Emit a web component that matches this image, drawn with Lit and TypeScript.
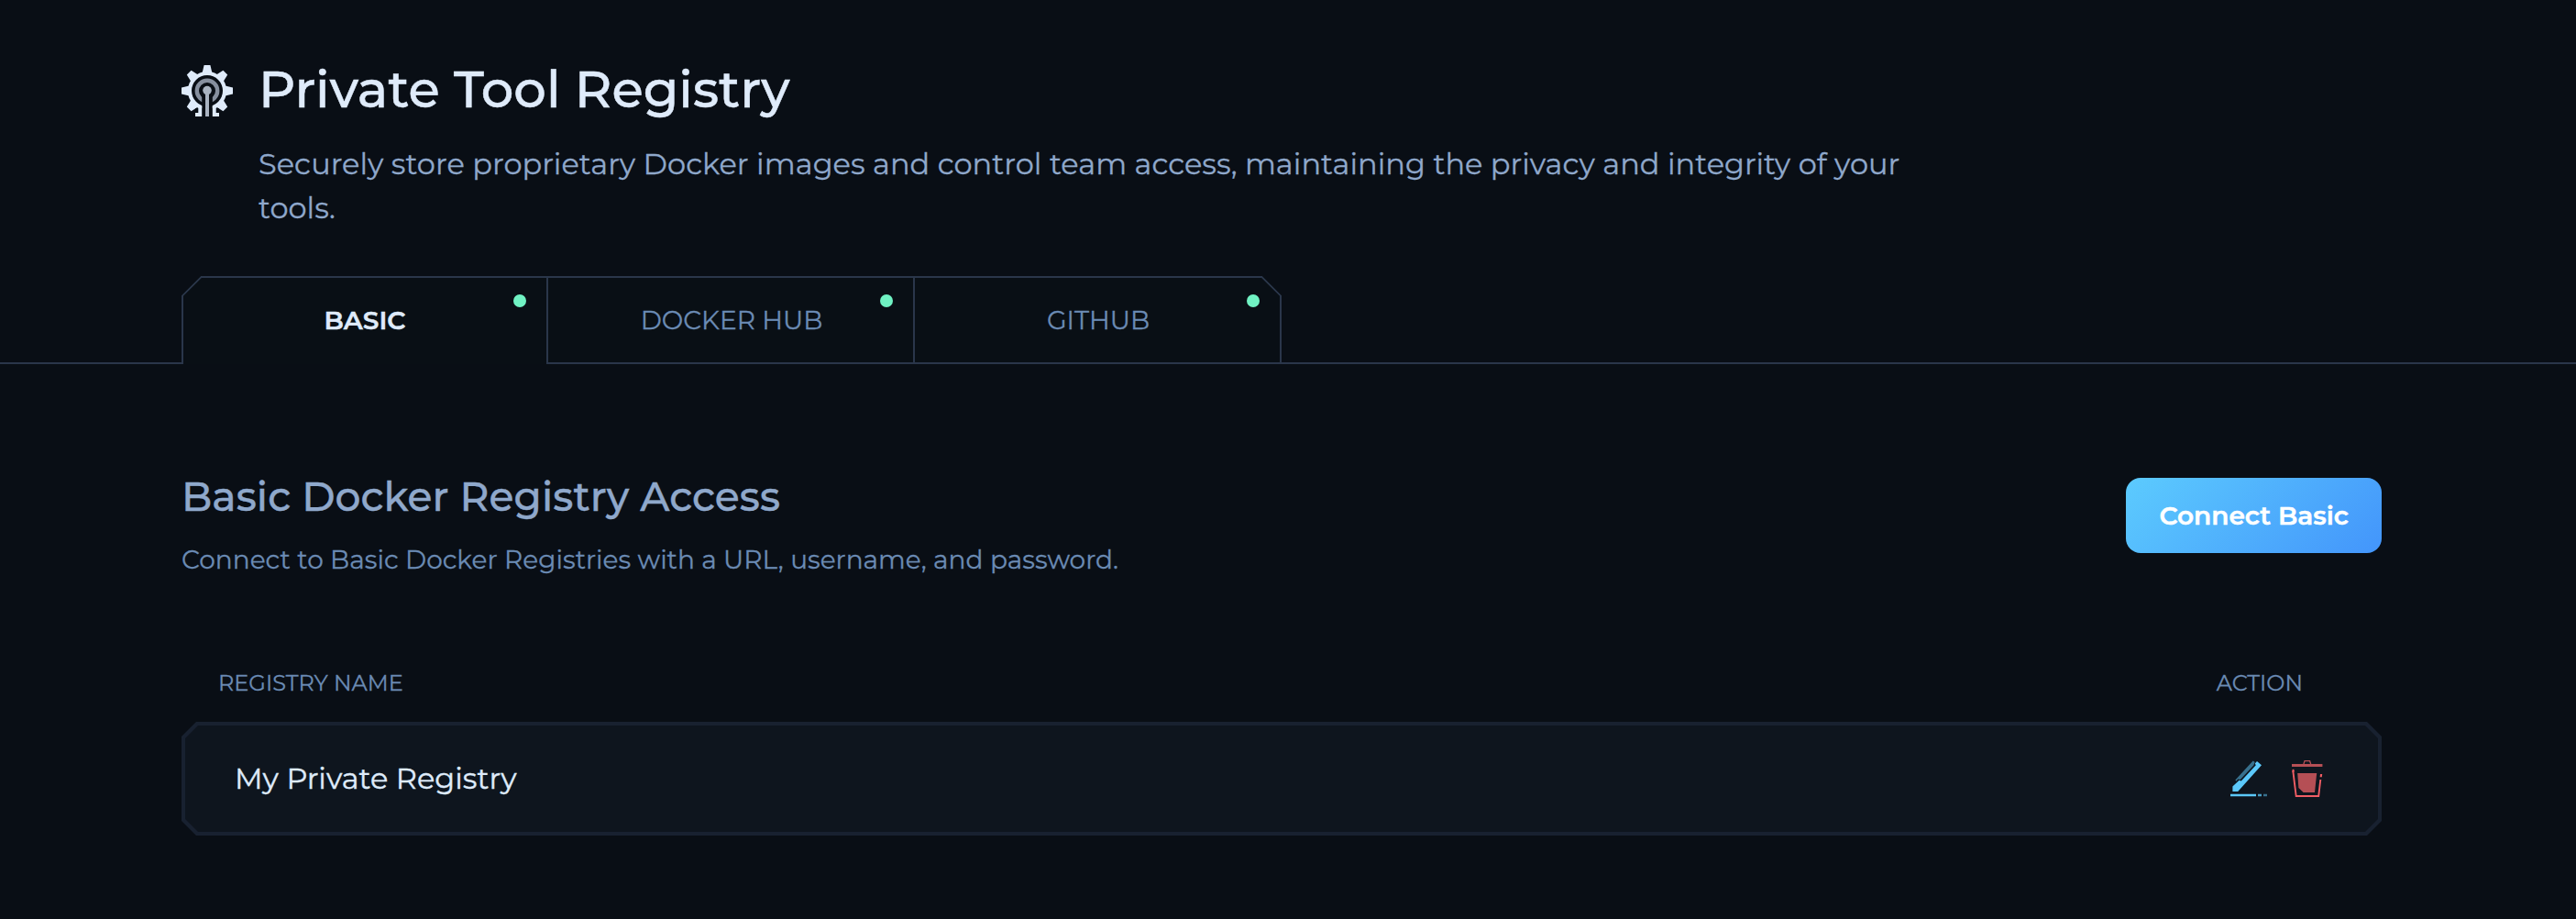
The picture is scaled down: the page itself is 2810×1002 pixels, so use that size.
import { LitElement, html, css, svg } from "lit";
import { customElement, property, state } from "lit/decorators.js";
import { classMap } from "lit/directives/class-map.js";

interface Tab {
  id: string;
  label: string;
  connected: boolean;
}

const TABS: Tab[] = [
  { id: "basic", label: "BASIC", connected: true },
  { id: "docker", label: "DOCKER HUB", connected: true },
  { id: "github", label: "GITHUB", connected: true },
];

const REGISTRIES = ["My Private Registry"];

const TEETH = [0, 45, 90, 135, 225, 270, 315];

const gearIcon = html`
  <svg class="gear" viewBox="0 0 56 56" width="56" height="56" aria-hidden="true">
    <g fill="#dfebfa">
      ${TEETH.map(
        (angle) => svg`<path d="M24.6 0h6.8l2 8.5h-10.8z" transform="rotate(${angle} 28 28)" />`
      )}
      <circle cx="28" cy="28" r="21.2" />
    </g>
    <circle cx="28" cy="28" r="17" fill="#090e15" />
    <circle cx="28" cy="28" r="11.2" fill="none" stroke="#868f9e" stroke-width="4.4" />
    <path d="M15 47h26v9H15z" fill="#090e15" />
    <path d="M22.2 28h11.6v28H22.2z" fill="#090e15" />
    <circle cx="28" cy="28" r="8.2" fill="#090e15" />
    <path d="M18.3 44.5h3.9V56H15v-4h3.3zM37.7 44.5h-3.9V56H41v-4h-3.3z" fill="#dfebfa" />
    <circle cx="28" cy="27.6" r="4.8" fill="#a9b3c1" />
    <path d="M26 28h4v28h-4z" fill="#a9b3c1" />
  </svg>
`;

const editIcon = html`
  <svg viewBox="0 0 40 40" width="40" height="40" aria-hidden="true">
    <path d="M5.3 21.6L24.7.4l2 1.6-1.4 3.6L10.8 21 8.2 20.4l-1.6 2.4z" fill="#37708d" />
    <path d="M2.4 34v-5.4l7.2-6.8 2.2.8L27.8 5.2l-1-1.8L29 .9l5 4.4L8.2 34z" fill="#5bc8fa" />
    <path d="M0 36.7h28v2.6H0z" fill="#5bc8fa" />
    <path d="M30 36.7h4v2.6h-4z" fill="#479bc2" />
    <path d="M36 36.7h4v2.6h-4z" fill="#37708d" />
  </svg>
`;

const trashIcon = html`
  <svg viewBox="0 0 34 40" width="34" height="40" aria-hidden="true">
    <path d="M0 4h33.4v3H0z" fill="#b54f55" />
    <path d="M12.8 4.4L14 .7h5.6l1.2 3.7" fill="none" stroke="#b54f55" stroke-width="1.3" />
    <path d="M1.3 11.6L4.7 39h24.5l2.1-18" fill="none" stroke="#f05d64" stroke-width="1.9" />
    <path d="M.3 10.6l1.8-1 .9 2.6L.6 13z" fill="#f05d64" />
    <path d="M31 15h2.2l-.4 3.2h-2.2z" fill="#f05d64" />
    <path d="M6.2 14h21l-2.2 21H12.6l-5.2-5z" fill="#b54f55" />
  </svg>
`;

@customElement("registry-tabs")
export class RegistryTabs extends LitElement {
  @property({ attribute: false }) tabs: Tab[] = [];
  @property() active = "";

  static styles = css`
    :host {
      display: flex;
      height: 96px;
    }
    .rule {
      box-sizing: border-box;
      border-bottom: 2px solid #2a364a;
    }
    .lead {
      width: 198px;
    }
    .trail {
      flex: 1;
    }
    .strip {
      position: relative;
      display: grid;
      grid-template-columns: repeat(3, 400px);
      background: #090f15;
      clip-path: polygon(0 21px, 21px 0, 1179px 0, 1200px 21px, 1200px 100%, 0 100%);
    }
    .outline {
      position: absolute;
      inset: 0;
      pointer-events: none;
    }
    .tab {
      position: relative;
      box-sizing: border-box;
      width: 400px;
      margin: 0;
      padding: 2px 0 0 2px;
      border: 0 solid #2a364a;
      border-bottom-width: 2px;
      border-right-width: 2px;
      background: none;
      color: #6b8bb4;
      font: 400 28px/34px Montserrat, "Open Sans", sans-serif;
      -webkit-text-stroke: 0.3px currentColor;
    }
    .tab:last-of-type {
      border-right: 0;
      padding-right: 2px;
    }
    .tab.active {
      color: #dfebfa;
      font-weight: 600;
      border-bottom: 0;
      padding-bottom: 2px;
      -webkit-text-stroke-width: 0.5px;
    }
    .dot {
      position: absolute;
      top: 20px;
      left: 362px;
      width: 14px;
      height: 14px;
      border-radius: 50%;
      background: #70f2c3;
    }
  `;

  private select(id: string) {
    this.dispatchEvent(new CustomEvent("tab-change", { detail: id }));
  }

  render() {
    return html`
      <div class="rule lead"></div>
      <div class="strip">
        ${this.tabs.map(
          (tab) => html`
            <button
              class=${classMap({ tab: true, active: tab.id === this.active })}
              @click=${() => this.select(tab.id)}
            >
              ${tab.label}${tab.connected ? html`<i class="dot"></i>` : null}
            </button>
          `
        )}
        <svg class="outline" viewBox="0 0 1200 96" width="1200" height="96">
          <path
            d="M1 96V21.4L21.4 1H1178.6L1199 21.4V96"
            fill="none"
            stroke="#2a364a"
            stroke-width="2"
          />
        </svg>
      </div>
      <div class="rule trail"></div>
    `;
  }
}

@customElement("registry-row")
export class RegistryRow extends LitElement {
  @property() name = "";

  static styles = css`
    :host {
      box-sizing: border-box;
      display: flex;
      justify-content: space-between;
      align-items: center;
      height: 124px;
      padding: 0 64px 0 58px;
      background: #182130;
      clip-path: polygon(
        0 16px, 16px 0, calc(100% - 16px) 0, 100% 16px,
        100% calc(100% - 16px), calc(100% - 16px) 100%, 16px 100%, 0 calc(100% - 16px)
      );
      position: relative;
      z-index: 0;
    }
    :host::before {
      content: "";
      position: absolute;
      z-index: -1;
      inset: 4px;
      background: #0e151e;
      clip-path: polygon(
        0 14px, 14px 0, calc(100% - 14px) 0, 100% 14px,
        100% calc(100% - 14px), calc(100% - 14px) 100%, 14px 100%, 0 calc(100% - 14px)
      );
    }
    .name {
      color: #dfebfa;
      font: 400 32px/39px Montserrat, "Open Sans", sans-serif;
      letter-spacing: 0.03px;
      -webkit-text-stroke: 0.4px currentColor;
      padding-bottom: 1px;
    }
    .actions {
      display: flex;
      gap: 27px;
    }
    button {
      display: block;
      padding: 0;
      border: 0;
      background: none;
    }
    svg {
      display: block;
    }
  `;

  render() {
    return html`
      <span class="name">${this.name}</span>
      <div class="actions">
        <button>${editIcon}</button>
        <button>${trashIcon}</button>
      </div>
    `;
  }
}

@customElement("app-root")
export class AppRoot extends LitElement {
  @state() private active = "basic";

  static styles = css`
    :host {
      display: block;
      box-sizing: border-box;
      height: 1002px;
      overflow: hidden;
      background: #090e15;
      font-family: Montserrat, "Open Sans", sans-serif;
      -webkit-text-stroke: 0.3px currentColor;
    }
    header {
      display: flex;
      gap: 28px;
      padding: 63px 0 50px 198px;
    }
    .gear {
      display: block;
      margin-top: 8px;
    }
    h1,
    h2,
    p {
      margin: 0;
    }
    h1 {
      color: #dfebfa;
      font-size: 56px;
      line-height: 68px;
      font-weight: 500;
      letter-spacing: 0.03px;
      -webkit-text-stroke-width: 0.5px;
    }
    .lede {
      width: 1810px;
      margin-top: 24px;
      color: #8fa8cb;
      font-size: 32px;
      line-height: 48px;
      letter-spacing: 0.034px;
    }
    main {
      padding: 117px 212px 0 198px;
    }
    .intro {
      display: flex;
      justify-content: space-between;
      align-items: flex-start;
    }
    h2 {
      color: #8fa8cb;
      font-size: 44px;
      line-height: 54px;
      font-weight: 500;
      letter-spacing: 0.05px;
      -webkit-text-stroke-width: 0.4px;
    }
    .hint {
      margin-top: 25px;
      color: #6b8bb4;
      font-size: 28px;
      line-height: 34px;
      letter-spacing: 0.015px;
    }
    .connect {
      margin: 7px 0 0;
      height: 82px;
      padding: 0 36px;
      border: 0;
      border-radius: 16px;
      background: linear-gradient(135deg, #5ccbfe, #4395fb);
      color: #fff;
      font: 600 28px/34px Montserrat, "Open Sans", sans-serif;
      -webkit-text-stroke: 0.5px currentColor;
    }
    .columns {
      display: flex;
      justify-content: space-between;
      margin-top: 103px;
      padding: 0 86px 28px 40px;
      color: #6b8bb4;
      font-size: 24px;
      line-height: 29px;
    }
  `;

  render() {
    return html`
      <header>
        ${gearIcon}
        <div>
          <h1>Private Tool Registry</h1>
          <p class="lede">
            Securely store proprietary Docker images and control team access, maintaining the
            privacy and integrity of your tools.
          </p>
        </div>
      </header>
      <registry-tabs
        .tabs=${TABS}
        .active=${this.active}
        @tab-change=${(e: CustomEvent<string>) => (this.active = e.detail)}
      ></registry-tabs>
      <main>
        <section class="intro">
          <div>
            <h2>Basic Docker Registry Access</h2>
            <p class="hint">
              Connect to Basic Docker Registries with a URL, username, and password.
            </p>
          </div>
          <button class="connect">Connect Basic</button>
        </section>
        <section>
          <div class="columns"><span>REGISTRY NAME</span><span>ACTION</span></div>
          ${REGISTRIES.map((name) => html`<registry-row .name=${name}></registry-row>`)}
        </section>
      </main>
    `;
  }
}
